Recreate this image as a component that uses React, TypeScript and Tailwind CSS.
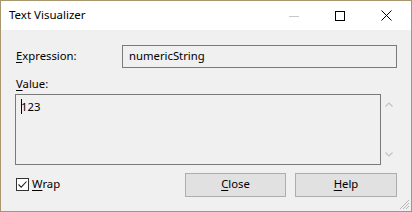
import React from "react";

export default function App() {
  const font = { fontFamily: '"Noto Sans", "Segoe UI", sans-serif' };
  return (
    <div
      className="w-[412px] h-[212px] border border-[#a8966e] bg-[#f0f0f0] flex flex-col text-[11.3px] text-black overflow-hidden"
      style={font}
    >
      {/* Title bar */}
      <div className="h-[29px] bg-white flex items-center shrink-0">
        <div className="pl-[8px] flex-1 leading-none pb-[1px] text-[11.5px]">Text Visualizer</div>
        <div className="flex items-center h-full">
          <div className="w-[46px] h-full flex items-center justify-center">
            <svg width="10" height="10" viewBox="0 0 10 10">
              <line x1="0" y1="5.5" x2="10" y2="5.5" stroke="#c8c8c8" strokeWidth="1" />
            </svg>
          </div>
          <div className="w-[46px] h-full flex items-center justify-center">
            <svg width="10" height="10" viewBox="0 0 10 10">
              <rect x="0.5" y="0.5" width="9" height="9" fill="none" stroke="#000" strokeWidth="1" />
            </svg>
          </div>
          <div className="w-[46px] h-full flex items-center justify-center mr-[2px]">
            <svg width="11" height="11" viewBox="0 0 11 11">
              <path d="M0.5 0.5 L10.5 10.5 M10.5 0.5 L0.5 10.5" stroke="#000" strokeWidth="1" />
            </svg>
          </div>
        </div>
      </div>

      {/* Body */}
      <div className="flex-1 flex flex-col pl-[14px] pr-[14px] relative">
        <div className="flex items-center mt-[15px] h-[23px]">
          <div className="w-[107px] pl-[1px]">
            <span className="underline underline-offset-2">E</span>xpression:
          </div>
          <div className="flex-1 h-[23px] border border-[#7a7a7a] flex items-center pl-[6px] pb-[1px]">
            numericString
          </div>
        </div>

        <div className="mt-[8px] h-[15px] pl-[1px] leading-[15px]">
          <span className="underline underline-offset-2">V</span>alue:
        </div>

        <div className="flex mt-[3px] h-[71px]">
          <div className="w-[366px] h-full border border-[#7a7a7a] pl-[5px] pt-[4px] relative">
            <div className="flex items-center leading-[14px]">
              <span className="inline-block w-[1px] h-[15px] bg-black -mr-[1px]"></span>
              <span>123</span>
            </div>
          </div>
          <div className="flex-1 flex flex-col items-center justify-between py-[8px] pr-[1px]">
            <svg width="8" height="5" viewBox="0 0 8 5">
              <path d="M0.5 4.5 L4 1 L7.5 4.5" fill="none" stroke="#c2c2c2" strokeWidth="1.2" />
            </svg>
            <svg width="8" height="5" viewBox="0 0 8 5">
              <path d="M0.5 0.5 L4 4 L7.5 0.5" fill="none" stroke="#c2c2c2" strokeWidth="1.2" />
            </svg>
          </div>
        </div>

        <div className="flex items-start mt-[8px]">
          <div className="flex items-center mt-[3px] pl-[1px] flex-1">
            <div className="w-[13px] h-[13px] border border-[#333] bg-white flex items-center justify-center">
              <svg width="11" height="11" viewBox="0 0 11 11">
                <path d="M1.5 5.5 L4.2 8.2 L9.5 2.5" fill="none" stroke="#222" strokeWidth="1.1" />
              </svg>
            </div>
            <span className="ml-[3px]">
              <span className="underline underline-offset-2">W</span>rap
            </span>
          </div>
          <button className="w-[101px] h-[24px] border border-[#adadad] bg-[#e1e1e1] flex items-center justify-center pb-[1px]">
            <span>
              <span className="underline underline-offset-2">C</span>lose
            </span>
          </button>
          <button className="w-[102px] h-[24px] border border-[#adadad] bg-[#e1e1e1] flex items-center justify-center ml-[9px] pb-[1px]">
            <span>
              <span className="underline underline-offset-2">H</span>elp
            </span>
          </button>
        </div>

        <svg className="absolute right-[1px] bottom-[1px]" width="12" height="12" viewBox="0 0 12 12">
          <path d="M11 2 L2 11 M11 5 L5 11 M11 8 L8 11" stroke="#b8b8b8" strokeWidth="1" />
        </svg>
      </div>
    </div>
  );
}
